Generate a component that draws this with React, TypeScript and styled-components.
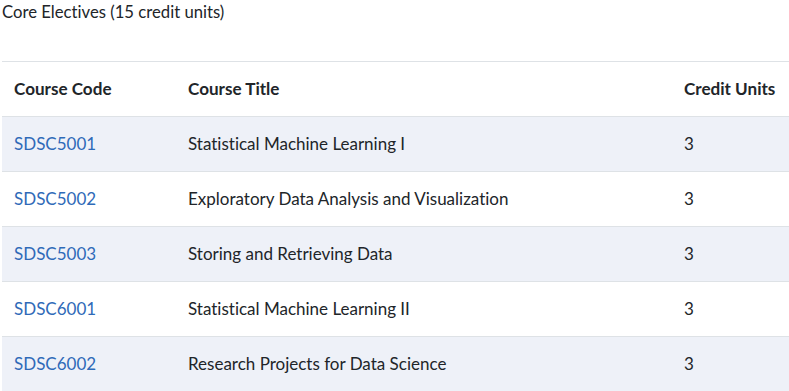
import React from "react";
import styled, { createGlobalStyle } from "styled-components";

const GlobalStyle = createGlobalStyle`
  html, body { margin: 0; padding: 0; background: #ffffff; }
  body {
    font-family: Lato, "Open Sans", sans-serif;
    color: #212529;
    font-variant-ligatures: none;
    font-feature-settings: "liga" 0, "clig" 0, "dlig" 0;
  }
`;

const Page = styled.div`
  padding-left: 2px;
`;

const Heading = styled.p`
  margin: 0 0 37px 0;
  font-size: 16.7px;
  line-height: 24px;
  color: #212529;
`;

const Table = styled.table`
  width: 100%;
  border-collapse: collapse;
  font-size: 17px;
  line-height: 24px;
`;

const HeadCell = styled.th<{ $w?: number }>`
  text-align: left;
  font-weight: 700;
  font-size: 17.1px;
  padding: 15px 12px;
  border-top: 1px solid #dee2e6;
  border-bottom: 1px solid #dee2e6;
  width: ${(p) => (p.$w ? `${p.$w}px` : "auto")};
  color: #212529;
`;

const Row = styled.tr<{ $striped: boolean }>`
  background: ${(p) => (p.$striped ? "#eef1f8" : "#ffffff")};
`;

const Cell = styled.td`
  padding: 15px 12px;
  border-bottom: 1px solid #dee2e6;
  color: #212529;
`;

const CodeLink = styled.a`
  color: #2f6ab8;
  text-decoration: none;
`;

const courses = [
  { code: "SDSC5001", title: "Statistical Machine Learning I", units: 3 },
  { code: "SDSC5002", title: "Exploratory Data Analysis and Visualization", units: 3 },
  { code: "SDSC5003", title: "Storing and Retrieving Data", units: 3 },
  { code: "SDSC6001", title: "Statistical Machine Learning II", units: 3 },
  { code: "SDSC6002", title: "Research Projects for Data Science", units: 3 },
];

export default function App() {
  return (
    <>
      <GlobalStyle />
      <Page>
        <Heading>Core Electives (15 credit units)</Heading>
        <Table>
          <thead>
            <tr>
              <HeadCell $w={150}>Course Code</HeadCell>
              <HeadCell $w={472}>Course Title</HeadCell>
              <HeadCell>Credit Units</HeadCell>
            </tr>
          </thead>
          <tbody>
            {courses.map((c, i) => (
              <Row key={c.code} $striped={i % 2 === 0}>
                <Cell>
                  <CodeLink href="#">{c.code}</CodeLink>
                </Cell>
                <Cell>{c.title}</Cell>
                <Cell>{c.units}</Cell>
              </Row>
            ))}
          </tbody>
        </Table>
      </Page>
    </>
  );
}
